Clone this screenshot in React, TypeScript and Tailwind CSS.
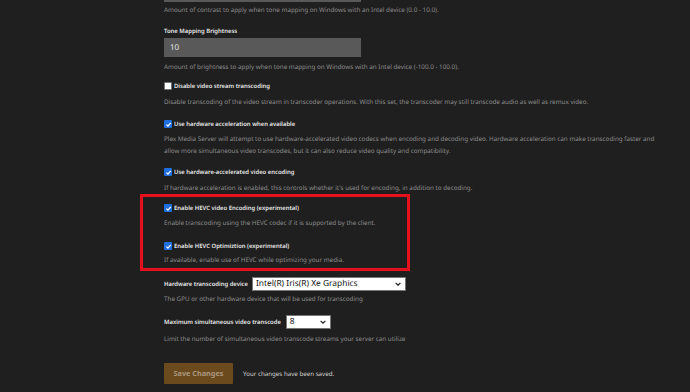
import type { ReactNode } from "react";

function Box({ checked }: { checked: boolean }) {
  if (!checked) {
    return <span className="inline-block h-[8px] w-[8px] shrink-0 rounded-[1px] border border-[#767676] bg-white" />;
  }
  return (
    <span className="inline-flex h-[8px] w-[8px] shrink-0 items-center justify-center rounded-[1px] bg-[#1f6fe0]">
      <svg viewBox="0 0 10 10" className="h-[7px] w-[7px]">
        <path d="M2 5.2 L4.2 7.3 L8.2 2.6" fill="none" stroke="white" strokeWidth="1.8" />
      </svg>
    </span>
  );
}

function Label({ children }: { children: ReactNode }) {
  return <div className="text-[5.9px] leading-[10px] font-semibold text-[#e8e8e8]">{children}</div>;
}

function Check({ checked, label }: { checked: boolean; label: string }) {
  return (
    <div className="flex h-[10px] items-center gap-[2px]">
      <Box checked={checked} />
      <Label>{label}</Label>
    </div>
  );
}

function Desc({ children, className = "" }: { children: ReactNode; className?: string }) {
  return <p className={`text-[6.3px] leading-[12px] text-[#8c8c8c] ${className}`}>{children}</p>;
}

function Select({ value, width }: { value: string; width: string }) {
  return (
    <div className={`flex h-[14px] items-center justify-between border border-[#767676] bg-white pl-[3px] pr-[4px] text-[8.4px] leading-[12px] text-[#111] ${width}`}>
      <span>{value}</span>
      <svg viewBox="0 0 10 6" className="h-[4px] w-[6px]">
        <path d="M1 1 L5 5 L9 1" fill="none" stroke="#222" strokeWidth="2" />
      </svg>
    </div>
  );
}

export default function App() {
  return (
    <div className="h-[392px] w-[690px] overflow-hidden bg-[#1f1f1f] font-['Noto_Sans',sans-serif] [text-rendering:geometricPrecision]">
      <div className="pl-[164px]">
        <div className="-mt-[2px] h-[4px] w-[197px] bg-[#595959]" />
        <Desc className="mt-[2px]">Amount of contrast to apply when tone mapping on Windows with an Intel device (0.0 - 10.0).</Desc>

        <div className="mt-[10px]">
          <Label>Tone Mapping Brightness</Label>
        </div>
        <div className="mt-[2px] flex h-[19px] w-[197px] items-center bg-[#595959] pl-[6px] text-[8px] text-[#e8e8e8]">10</div>
        <Desc className="mt-[4px]">Amount of brightness to apply when tone mapping on Windows with an Intel device (-100.0 - 100.0).</Desc>

        <div className="mt-[8px]">
          <Check checked={false} label="Disable video stream transcoding" />
        </div>
        <Desc className="mt-[5px] w-[490px]">
          Disable transcoding of the video stream in transcoder operations. With this set, the transcoder may still transcode audio as well as remux video.
        </Desc>

        <div className="mt-[11px]">
          <Check checked label="Use hardware acceleration when available" />
        </div>
        <Desc className="mt-[4px] w-[500px] leading-[11.5px]">
          Plex Media Server will attempt to use hardware-accelerated video codecs when encoding and decoding video. Hardware acceleration can make transcoding faster and
          <br />
          allow more simultaneous video transcodes, but it can also reduce video quality and compatibility.
        </Desc>

        <div className="mt-[10px]">
          <Check checked label="Use hardware-accelerated video encoding" />
        </div>
        <Desc className="mt-[5px] w-[490px]">If hardware acceleration is enabled, this controls whether it&apos;s used for encoding, in addition to decoding.</Desc>
      </div>

      <div className="ml-[140px] h-[77px] w-[270px] border-[3px] border-[#e5101c] pl-[21px] pt-[6px]">
        <Check checked label="Enable HEVC video Encoding (experimental)" />
        <Desc className="mt-[4px]">Enable transcoding using the HEVC codec if it is supported by the client.</Desc>
        <div className="mt-[12px]">
          <Check checked label="Enable HEVC Optimiztion (experimental)" />
        </div>
        <Desc className="mt-[3px]">If available, enable use of HEVC while optimizing your media.</Desc>
      </div>

      <div className="pl-[164px]">
        <div className="mt-[6px] flex items-center gap-[4px]">
          <Label>Hardware transcoding device</Label>
          <Select value="Intel(R) Iris(R) Xe Graphics" width="w-[154px]" />
        </div>
        <Desc className="mt-[2px]">The GPU or other hardware device that will be used for transcoding</Desc>

        <div className="mt-[10px] flex items-center gap-[5px]">
          <Label>Maximum simultaneous video transcode</Label>
          <Select value="8" width="w-[45px]" />
        </div>
        <Desc className="mt-[4px]">Limit the number of simultaneous video transcode streams your server can utilize</Desc>

        <div className="mt-[18px] flex items-center gap-[10px]">
          <button className="h-[21px] w-[69px] rounded-[1px] bg-[#6b4a1e] text-[7.3px] font-bold text-[#a8987e]">Save Changes</button>
          <span className="text-[6.2px] text-[#d0d0d0]">Your changes have been saved.</span>
        </div>
      </div>
    </div>
  );
}
